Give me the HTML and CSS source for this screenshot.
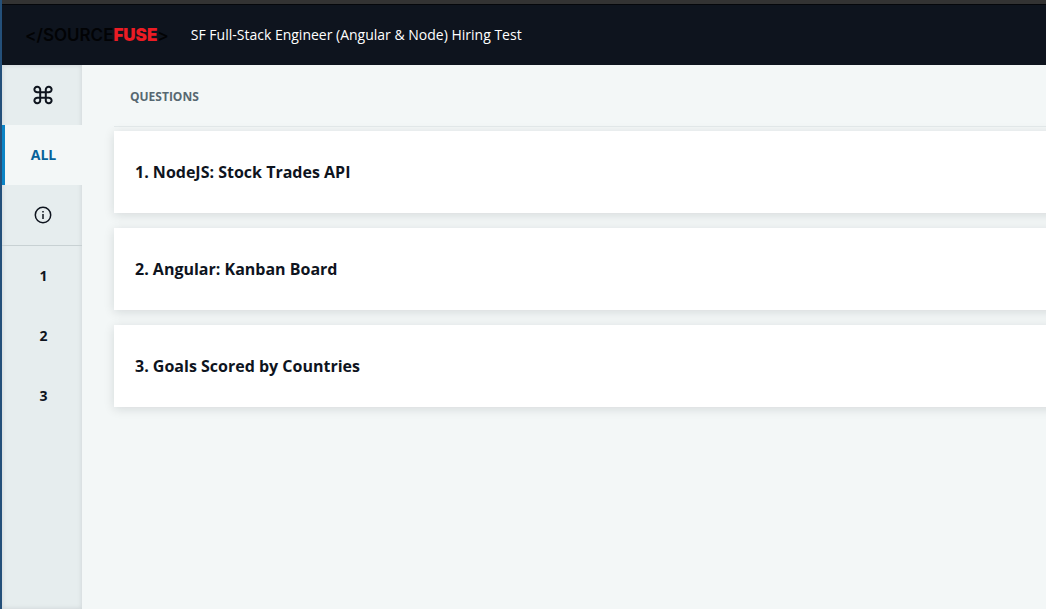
FILE: index.html
```html
<!DOCTYPE html>
<html lang="en">
<head>
<meta charset="utf-8">
<meta name="viewport" content="width=device-width, initial-scale=1">
<title>SF Full-Stack Engineer (Angular &amp; Node) Hiring Test</title>
<link rel="stylesheet" href="styles.css">
</head>
<body>
<div class="window">
  <header class="header">
    <div class="logo">&lt;/SOURCE<span class="logo-accent">FUSE</span>&gt;</div>
    <h1 class="test-title">SF Full-Stack Engineer (Angular &amp; Node) Hiring Test</h1>
  </header>
  <div class="body">
    <nav class="sidebar" aria-label="Questions">
      <a class="nav-item nav-item-icon" href="#shortcuts" aria-label="Shortcuts">
        <svg class="icon-command" viewBox="0 0 20 20" fill="none" stroke="currentColor" stroke-width="2" aria-hidden="true">
          <path d="M7.2 7.2H4.6A2.9 2.7 0 1 1 7.2 4.4V15.6A2.9 2.7 0 1 1 4.6 12.8H15.4A2.9 2.7 0 1 1 12.8 15.6V4.4A2.9 2.7 0 1 1 15.4 7.2Z"/>
        </svg>
      </a>
      <a class="nav-item nav-item-active" href="#all" aria-current="page">ALL</a>
      <a class="nav-item nav-item-icon" href="#info" aria-label="Information">
        <svg class="icon-info" viewBox="0 0 18 18" fill="none" stroke="currentColor" stroke-width="1.5" aria-hidden="true">
          <circle cx="9" cy="9" r="7.7"/>
          <path d="M9 8V13M9 5V6.5"/>
        </svg>
      </a>
      <div class="nav-questions">
        <a class="nav-item" href="#q1">1</a>
        <a class="nav-item" href="#q2">2</a>
        <a class="nav-item" href="#q3">3</a>
      </div>
    </nav>
    <main class="content">
      <h2 class="list-title">QUESTIONS</h2>
      <div class="list">
        <article class="card" id="q1"><h3 class="card-title">1. NodeJS: Stock Trades API</h3></article>
        <article class="card" id="q2"><h3 class="card-title">2. Angular: Kanban Board</h3></article>
        <article class="card" id="q3"><h3 class="card-title">3. Goals Scored by Countries</h3></article>
      </div>
    </main>
  </div>
</div>
</body>
</html>
```
FILE: styles.css
```css
* {
  box-sizing: border-box;
}

body {
  margin: 0;
  background: #f3f7f7;
  color: #0e141e;
  font-family: "Open Sans", "Noto Sans", sans-serif;
}

h1, h2, h3 {
  margin: 0;
}

.window {
  display: flex;
  flex-direction: column;
  min-height: 100vh;
  border-left: 2px solid #24507a;
  overflow: hidden;
}

.header {
  display: flex;
  align-items: center;
  gap: 22px;
  padding: 19px 23px 18px;
  border-top: 4px solid #333333;
  background: #0e141e;
  box-shadow: inset 0 1px 0 #05070b;
}

.logo {
  font-family: Inter, sans-serif;
  font-size: 17px;
  font-weight: 600;
  line-height: 24px;
  color: #020305;
  white-space: nowrap;
}

.logo-accent {
  font-weight: 900;
  color: #ec1c24;
}

.test-title {
  font-size: 14px;
  font-weight: 400;
  line-height: 24px;
  color: #ffffff;
}

.body {
  display: flex;
  flex: 1;
}

.sidebar {
  flex: none;
  width: 80px;
  background: #e6edee;
  box-shadow: inset 0 0 5px rgba(14, 20, 30, 0.12);
}

.nav-item {
  display: flex;
  align-items: center;
  justify-content: center;
  height: 60px;
  padding-left: 3px;
  font-size: 14px;
  font-weight: 700;
  line-height: 20px;
  color: #0e141e;
  text-decoration: none;
}

.nav-item-icon {
  padding-left: 2px;
}

.nav-item-active {
  padding-left: 0;
  border-left: 3px solid #0b84c6;
  background: #f3f7f7;
  color: #06629a;
}

.nav-questions {
  border-top: 1px solid #c8d1d3;
}

.icon-command {
  width: 20px;
  height: 20px;
}

.icon-info {
  width: 18px;
  height: 18px;
}

.content {
  flex: 1;
  min-width: 0;
  padding-left: 32px;
}

.list-title {
  padding: 23px 16px 20px;
  border-bottom: 1px solid #e4eaeb;
  font-size: 12px;
  font-weight: 700;
  line-height: 18px;
  color: #576871;
}

/* Cards bleed past the right edge of the window */
.list {
  display: flex;
  flex-direction: column;
  gap: 15px;
  margin-right: -16px;
  padding-top: 4px;
}

.card {
  padding: 29px 21px;
  background: #ffffff;
  box-shadow: 0 2px 10px rgba(14, 20, 30, 0.13);
}

.card-title {
  font-size: 16px;
  font-weight: 700;
  line-height: 24px;
}
```
